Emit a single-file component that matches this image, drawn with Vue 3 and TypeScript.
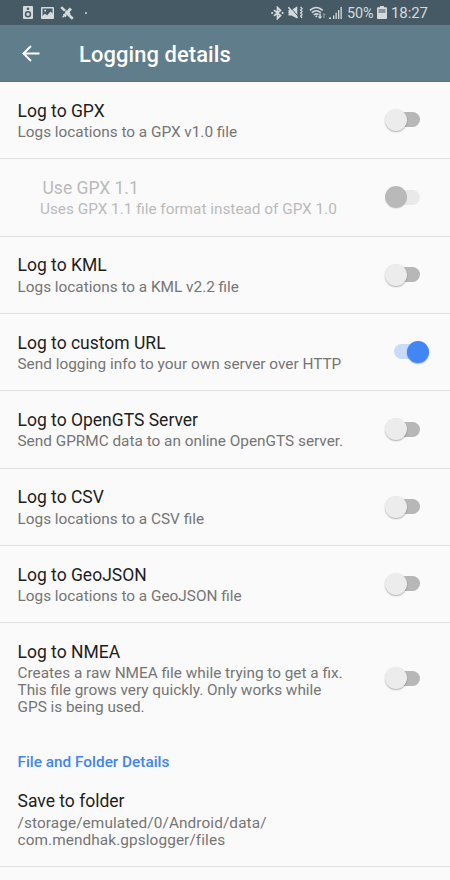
<script setup lang="ts">
interface Preference {
  title: string
  lines: string[]
  checked: boolean
  disabled?: boolean
}

const preferences: Preference[] = [
  { title: 'Log to GPX', lines: ['Logs locations to a GPX v1.0 file'], checked: false },
  { title: 'Use GPX 1.1', lines: ['Uses GPX 1.1 file format instead of GPX 1.0'], checked: false, disabled: true },
  { title: 'Log to KML', lines: ['Logs locations to a KML v2.2 file'], checked: false },
  { title: 'Log to custom URL', lines: ['Send logging info to your own server over HTTP'], checked: true },
  { title: 'Log to OpenGTS Server', lines: ['Send GPRMC data to an online OpenGTS server.'], checked: false },
  { title: 'Log to CSV', lines: ['Logs locations to a CSV file'], checked: false },
  { title: 'Log to GeoJSON', lines: ['Logs locations to a GeoJSON file'], checked: false },
  {
    title: 'Log to NMEA',
    lines: ['Creates a raw NMEA file while trying to get a fix.', 'This file grows very quickly. Only works while', 'GPS is being used.'],
    checked: false,
  },
]

const folderLines: string[] = ['/storage/emulated/0/Android/data/', 'com.mendhak.gpslogger/files']
</script>

<template>
  <div class="screen">
    <header class="status-bar">
      <div class="notifications">
        <svg class="speaker" viewBox="0 0 10 13">
          <path fill-rule="evenodd" d="M1 0h8a1 1 0 0 1 1 1v11a1 1 0 0 1-1 1H1a1 1 0 0 1-1-1V1a1 1 0 0 1 1-1zM5 1.4a1.3 1.3 0 1 0 0 2.6a1.3 1.3 0 0 0 0-2.6zM5 5a3.2 3.2 0 1 0 0 6.4A3.2 3.2 0 0 0 5 5zM5 6.5a1.7 1.7 0 1 1 0 3.4a1.7 1.7 0 0 1 0-3.4z" />
        </svg>
        <svg class="image" viewBox="0 0 13 12">
          <path fill-rule="evenodd" d="M1 0h11a1 1 0 0 1 1 1v10a1 1 0 0 1-1 1H1a1 1 0 0 1-1-1V1a1 1 0 0 1 1-1zM1.500 1.500V9L4 6.500l2 2 3.500-4 2 2V1.500zM3.300 2.700h1.800v1.800H3.300z" />
        </svg>
        <svg class="satellite" viewBox="0 0 14 14">
          <path d="M2 .3L5.800 3.700 4 5.600.3 2zM5.500 4.200l3 .3 2 3-.4 2-1.900.4-3.200-2.500zM9.500 8L13.700 11.800 11.800 13.700 8 10zM7.500 4L9.700 1.500 12 3.600 9.600 6zM4.700 7.300l2.200 2.200-1.500 1.800-1-.8-1.400 1.200-.9-.9 1.300-1.300-.7-.8z" />
        </svg>
        <i class="more"></i>
      </div>
      <div class="indicators">
        <svg class="bluetooth" viewBox="0 0 13 14">
          <path d="M3 4.200l6.500 5.400-3 2.900V1.500l3 2.900L3 9.800" fill="none" stroke="currentColor" stroke-width="1.700" />
          <circle cx="1.200" cy="7" r="1.100" /><circle cx="11.600" cy="7" r="1.100" />
        </svg>
        <svg class="mute" viewBox="0 0 15 13">
          <path d="M.5 4h3L9.300.2v12.400L3.500 9.500H.5z" />
          <path d="M1.500.5l9.600 10.800" fill="none" stroke="#455a64" stroke-width="1" />
          <path d="M.4 1.200l9 10.500" fill="none" stroke="currentColor" stroke-width="1.500" />
          <path d="M12.500 1l1.500 1.500-1.300 1.500L14 5.500 12.700 7 14 8.500 12.700 10l1.300 1.700" fill="none" stroke="currentColor" stroke-width="1.400" />
        </svg>
        <svg class="wifi" viewBox="0 0 18 14">
          <path d="M.8 4.300Q7.300-1.300 13.800 4.300M2.800 6.700Q7.300 2.800 11.800 6.700M4.800 9Q7.300 6.900 9.500 8.700" fill="none" stroke="currentColor" stroke-width="1.600" />
          <path d="M6 10.200l1.500-.9 1 .9-1.200 1.400zM10.300 7.500h1.500v3h1.500L11 13l-2.300-2.500h1.600z" />
          <path class="dim" d="M14.300 12V9h-1.200l1.900-2 1.900 2h-1.200v3z" />
        </svg>
        <svg class="signal" viewBox="0 0 13 12">
          <path d="M0 10.500h2V12H0zM4 8.500h1.300V12H4zM6.500 5.800h1.300V12H6.500zM9 3h1.300v9H9zM11.500 0h1.300v12h-1.300z" />
        </svg>
        <span class="percent">50%</span>
        <svg class="battery" viewBox="0 0 10 13">
          <path d="M3 0h4v1.300h2a1 1 0 0 1 1 1V12a1 1 0 0 1-1 1H1a1 1 0 0 1-1-1V2.300a1 1 0 0 1 1-1h2z" />
          <path class="battery-empty" d="M1.500 3h7v4h-7z" />
        </svg>
        <time>18:27</time>
      </div>
    </header>

    <nav class="toolbar">
      <svg class="back" viewBox="0 0 18 17"><path d="M17.500 8.500H1.800M9 1L1.500 8.500 9 16" /></svg>
      <h1>Logging details</h1>
    </nav>

    <main>
      <section
        v-for="item in preferences"
        :key="item.title"
        class="row"
        :class="{ disabled: item.disabled, tall: item.lines.length > 1 }"
      >
        <div class="copy">
          <h2>{{ item.title }}</h2>
          <p v-for="line in item.lines" :key="line">{{ line }}</p>
        </div>
        <div class="switch" :class="{ on: item.checked }">
          <span class="track"><span class="thumb"></span></span>
        </div>
      </section>
      <h3>File and Folder Details</h3>
      <section class="row folder">
        <div class="copy">
          <h2>Save to folder</h2>
          <p v-for="line in folderLines" :key="line">{{ line }}</p>
        </div>
      </section>
    </main>
  </div>
</template>

<style>
body { margin: 0; background: #fafafa; }
</style>

<style scoped>
.screen { width: 450px; height: 880px; overflow: hidden; background: #fafafa; font-family: Roboto, sans-serif; }
h1, h2, h3, p { margin: 0; }
svg { display: block; flex: none; fill: currentColor; }
.status-bar { box-sizing: border-box; height: 25px; padding: 0 23px; display: flex; justify-content: space-between; align-items: center; background: #455a64; color: #d5dadd; }
.notifications, .indicators { display: flex; align-items: center; height: 25px; }
.speaker { width: 10px; height: 13px; margin-right: 8px; }
.image { width: 13px; height: 12px; margin-right: 6px; }
.satellite { width: 14px; height: 14px; }
.more { width: 2px; height: 2px; margin-left: 11px; border-radius: 1px; background: currentColor; }
.bluetooth { width: 13px; height: 14px; margin-right: 4px; }
.mute { width: 15px; height: 13px; margin-right: 6px; }
.wifi { width: 18px; height: 14px; margin-right: 2px; }
.dim { opacity: .45; }
.signal { width: 13px; height: 12px; margin: 1px 5px 0 0; }
.percent, time { font-size: 15px; line-height: 25px; padding-top: 2px; letter-spacing: -.1px; }
.percent { width: 26px; margin-right: 4px; font-size: 14.4px; }
.battery { width: 10px; height: 13px; margin-right: 4px; }
.battery-empty { fill: #87949b; }
time { width: 36px; }
.toolbar { box-sizing: border-box; height: 57px; padding: 0 22px; display: flex; align-items: center; background: #607d8b; color: #fff; border-bottom: 1px solid #58737f; }
.back { width: 18px; height: 17px; fill: none; stroke: currentColor; stroke-width: 2; }
h1 { margin-left: 39px; font-size: 21.9px; letter-spacing: .1px; font-weight: 500; line-height: 26px; padding-top: 3px; }
.row { box-sizing: border-box; height: 77.33px; padding: 18.6px 20px 0 17.5px; display: flex; justify-content: space-between; border-bottom: 1.5px solid #dfdfdf; }
h2 { font-size: 17.5px; line-height: 20px; font-weight: 400; color: #1e1e1e; margin-bottom: 3.4px; white-space: nowrap; }
p { font-size: 15.35px; line-height: 17px; color: #757575; white-space: nowrap; }
.disabled h2, .disabled p { color: #bababa; }
.disabled .copy { padding-left: 22.5px; }
.disabled h2 { padding-left: 2.5px; }
.switch { width: 45px; height: 22px; margin-top: 8.4px; display: flex; align-items: center; }
.track { position: relative; width: 30px; height: 15px; margin-left: 5px; border-radius: 8px; background: #b7b7b7; }
.thumb { position: absolute; left: -5px; top: -3.5px; width: 22px; height: 22px; border-radius: 50%; background: #ececec; box-shadow: 0 1px 1.5px rgba(0, 0, 0, .3); }
.on .track { margin-left: 9px; background: #c8dbfb; }
.on .thumb { left: 13px; background: #4285f4; }
.disabled .track { background: #e9e9e9; }
.disabled .thumb { background: #b9b9b9; box-shadow: 0 1px 1px rgba(0, 0, 0, .08); }
.tall { height: 121px; border-bottom: 0; }
.tall .switch { margin-top: 25.4px; }
h3 { padding: 9px 17.5px 0; font-size: 15.35px; line-height: 18px; font-weight: 500; color: #4285f4; }
.folder { height: 95.6px; padding-top: 19.6px; }
.folder h2 { margin-bottom: 4px; }
.folder p { letter-spacing: .1px; }
</style>
